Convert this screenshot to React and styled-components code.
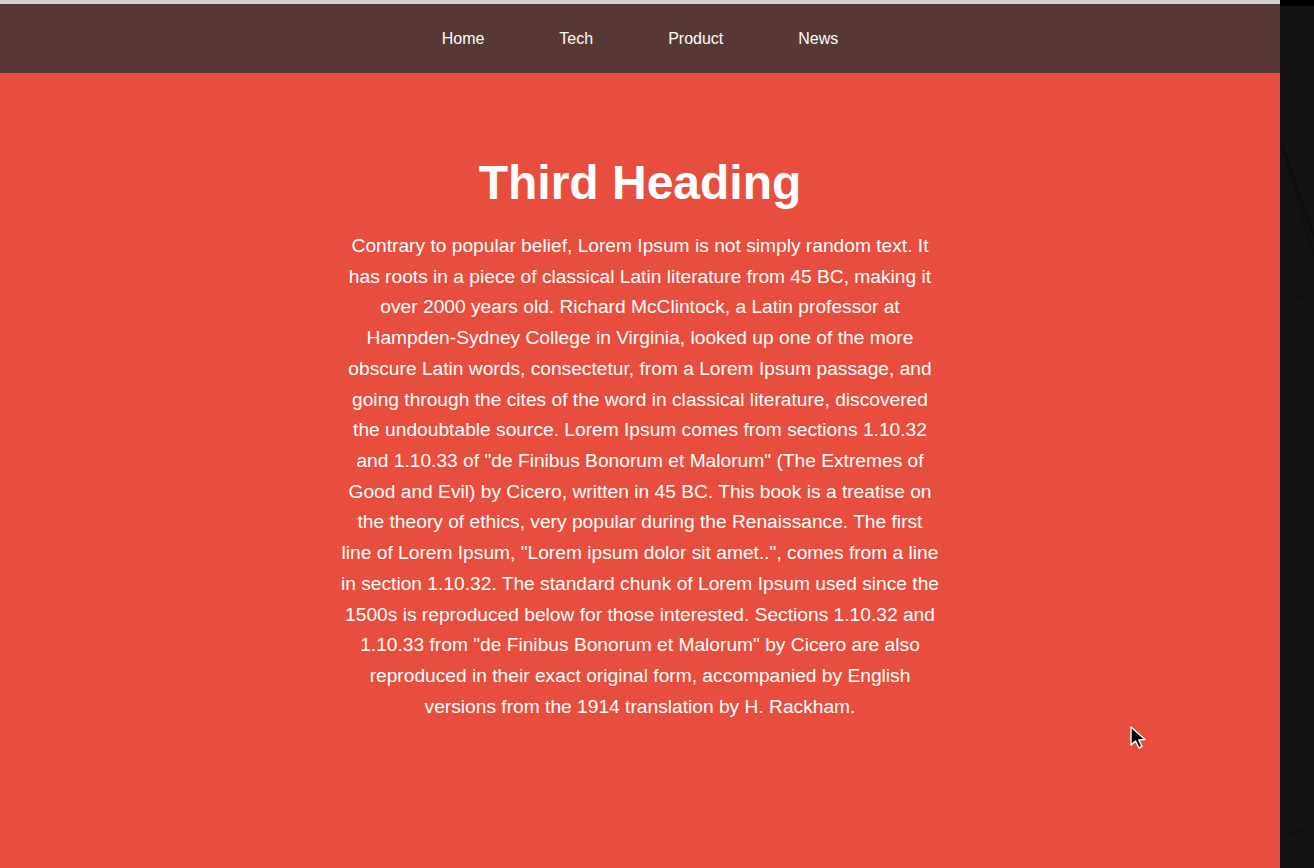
import styled, { createGlobalStyle } from "styled-components";

const GlobalStyle = createGlobalStyle`
  html, body {
    margin: 0;
    padding: 0;
    background: #131313;
    font-family: "Liberation Sans", Arial, sans-serif;
  }
`;

const Screen = styled.div`
  position: relative;
  display: flex;
  width: 1314px;
  height: 868px;
  overflow: hidden;
`;

const Page = styled.div`
  width: 1280px;
  display: flex;
  flex-direction: column;
  background: #e84e3e;
`;

const TopStrip = styled.div`
  height: 4px;
  background: #d2d2d2;
`;

const Navbar = styled.nav`
  height: 69px;
  background: #573835;
  display: flex;
  justify-content: center;
  align-items: center;
  gap: 75px;
`;

const NavLink = styled.a`
  color: #fff;
  font-size: 16px;
  text-decoration: none;
  cursor: pointer;
`;

const Hero = styled.section`
  display: flex;
  flex-direction: column;
  align-items: center;
  padding-top: 82px;
  color: #fff;
  text-align: center;
`;

const Heading = styled.h1`
  margin: 0 0 21px;
  font-size: 48px;
  line-height: 55px;
  font-weight: bold;
`;

const Text = styled.p`
  margin: 0;
  width: 600px;
  font-size: 19.2px;
  line-height: 30.72px;
`;

const Side = styled.div`
  flex: 1;
  display: flex;
  flex-direction: column;
  background: #131313;
`;

const SideTop = styled.div`
  height: 6px;
  background: #000;
`;

const Pointer = styled.svg`
  position: absolute;
  left: 1128px;
  top: 725px;
`;

const links = ["Home", "Tech", "Product", "News"];

export default function App() {
  return (
    <>
      <GlobalStyle />
      <Screen>
        <Page>
          <TopStrip />
          <Navbar>
            {links.map((l) => (
              <NavLink key={l}>{l}</NavLink>
            ))}
          </Navbar>
          <Hero>
            <Heading>Third Heading</Heading>
            <Text>
              Contrary to popular belief, Lorem Ipsum is not simply random text. It
              has roots in a piece of classical Latin literature from 45 BC, making it
              over 2000 years old. Richard McClintock, a Latin professor at
              Hampden-Sydney College in Virginia, looked up one of the more obscure
              Latin words, consectetur, from a Lorem Ipsum passage, and going through
              the cites of the word in classical literature, discovered the
              undoubtable source. Lorem Ipsum comes from sections 1.10.32 and 1.10.33
              of "de Finibus Bonorum et Malorum" (The Extremes of Good and Evil) by
              Cicero, written in 45 BC. This book is a treatise on the theory of
              ethics, very popular during the Renaissance. The first line of Lorem
              Ipsum, "Lorem ipsum dolor sit amet..", comes from a line in section
              1.10.32. The standard chunk of Lorem Ipsum used since the 1500s is
              reproduced below for those interested. Sections 1.10.32 and 1.10.33
              from "de Finibus Bonorum et Malorum" by Cicero are also reproduced in
              their exact original form, accompanied by English versions from the
              1914 translation by H. Rackham.
            </Text>
          </Hero>
        </Page>
        <Side>
          <SideTop />
          <svg width="34" height="862" viewBox="0 0 34 862">
            <path d="M2 140 L34 230" stroke="#0e0e0e" strokeWidth="3" />
            <path d="M8 160 L34 250" stroke="#101010" strokeWidth="2" />
            <path d="M0 296 L34 288" stroke="#0f0f0f" strokeWidth="1" />
            <path d="M0 830 L34 822" stroke="#0f0f0f" strokeWidth="1" />
          </svg>
        </Side>
        <Pointer width="22" height="26" viewBox="0 0 22 26">
          <path
            d="M3 2 L3 20 L7.5 16 L11 23 L14 21.5 L10.8 15 L17 14.5 Z"
            fill="#000"
            stroke="#fff"
            strokeWidth="1.4"
            strokeLinejoin="round"
          />
        </Pointer>
      </Screen>
    </>
  );
}
